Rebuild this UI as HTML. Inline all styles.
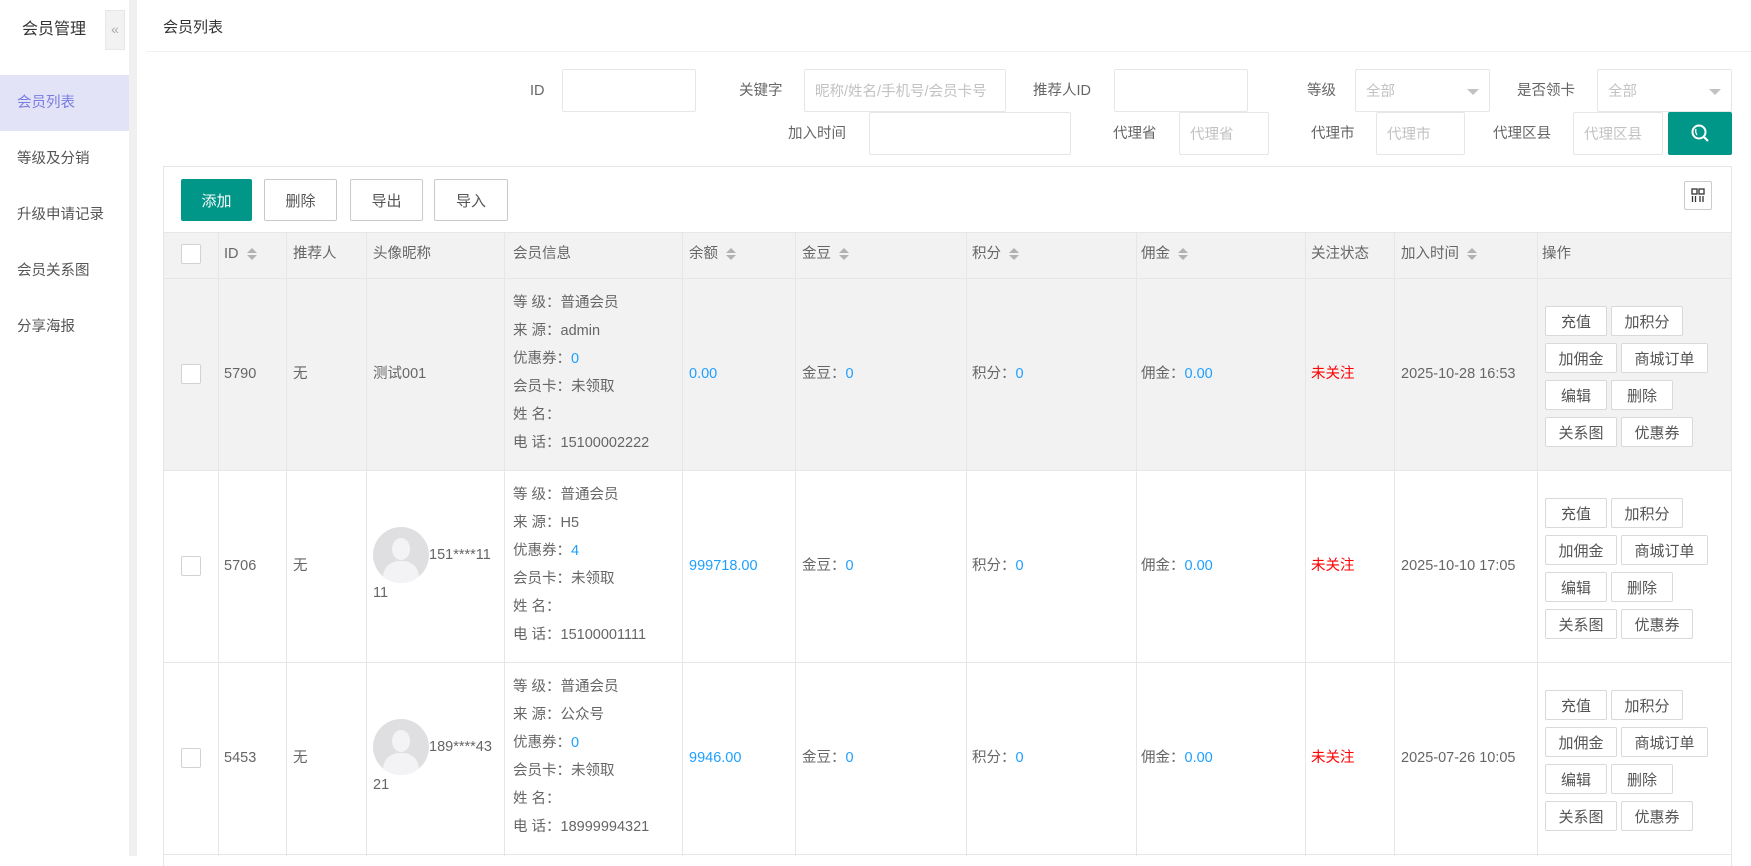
<!DOCTYPE html>
<html><head><meta charset="utf-8"><style>
*{margin:0;padding:0;box-sizing:border-box}
body{width:1751px;height:856px;overflow:hidden;background:#fff;font-family:"Liberation Sans","Noto Sans CJK SC",sans-serif;font-size:14.5px;color:#666;position:relative}
.a{position:absolute;white-space:nowrap}
.t{position:absolute;white-space:nowrap;transform:translateY(-50%);line-height:20px}
.inp{position:absolute;border:1px solid #e6e6e6;border-radius:2px;background:#fff;color:#c2c2c2;padding-left:10px;display:flex;align-items:center}
.btn{position:absolute;border:1px solid #c9c9c9;border-radius:2px;background:#fff;color:#555;display:flex;align-items:center;justify-content:center;font-size:15px}
.ob{position:absolute;border:1px solid #d9d9d9;border-radius:2px;background:#fff;color:#555;display:flex;align-items:center;justify-content:center;height:30px;font-size:15px}
.vl{position:absolute;width:1px;background:#e6e6e6}
.hl{position:absolute;height:1px;background:#e6e6e6}
.cb{position:absolute;width:20px;height:20px;border:1px solid #d2d2d2;border-radius:2px;background:#fff}
.b{color:#1e9fff}.r{color:#f00}
.sort{display:inline-block;vertical-align:middle;margin-left:8px;width:10px;height:14px;position:relative}
.sort:before{content:"";position:absolute;left:0;top:1px;border:5px solid transparent;border-top:0;border-bottom:5px solid #b2b2b2}
.sort:after{content:"";position:absolute;left:0;bottom:1px;border:5px solid transparent;border-bottom:0;border-top:5px solid #b2b2b2}
.av{position:absolute;width:56px;height:56px;border-radius:50%;background:#dfdfe1;overflow:hidden}
.av:before{content:"";position:absolute;left:19px;top:11px;width:18px;height:22px;border-radius:50%;background:#f3f3f5}
.av:after{content:"";position:absolute;left:10px;top:34px;width:36px;height:30px;border-radius:16px 16px 0 0;background:#f3f3f5}
</style></head><body>
<!-- sidebar -->
<div class="a" style="left:0;top:0;width:129px;height:856px;background:#fff"></div>
<div class="a" style="left:129px;top:0;width:8px;height:856px;background:#f0f0f0"></div>
<div class="t" style="left:22px;top:30px;font-size:16px;color:#333">会员管理</div>
<div class="a" style="left:105px;top:10px;width:20px;height:40px;background:#f2f2f2;border:1px solid #e8e8e8;color:#aaa;font-size:14px;text-align:center;line-height:36px">«</div>
<div class="a" style="left:0;top:75px;width:129px;height:56px;background:#e3e3f8"></div>
<div class="t" style="left:17px;top:103px;color:#7a7ce0">会员列表</div>
<div class="t" style="left:17px;top:159px;color:#555">等级及分销</div>
<div class="t" style="left:17px;top:215px;color:#555">升级申请记录</div>
<div class="t" style="left:17px;top:271px;color:#555">会员关系图</div>
<div class="t" style="left:17px;top:327px;color:#555">分享海报</div>
<!-- header -->
<div class="t" style="left:163px;top:28px;font-size:15px;color:#333">会员列表</div>
<div class="hl" style="left:146px;top:51px;width:1605px;background:#f0f0f0"></div>
<!-- filters -->
<div class="t" style="left:530px;top:91px">ID</div>
<div class="inp" style="left:562px;top:69px;width:134px;height:43px"></div>
<div class="t" style="left:739px;top:91px">关键字</div>
<div class="inp" style="left:804px;top:69px;width:202px;height:43px">昵称/姓名/手机号/会员卡号</div>
<div class="t" style="left:1033px;top:91px">推荐人ID</div>
<div class="inp" style="left:1114px;top:69px;width:134px;height:43px"></div>
<div class="t" style="left:1307px;top:91px">等级</div>
<div class="inp" style="left:1355px;top:69px;width:135px;height:43px">全部<span style="position:absolute;right:10px;top:19px;border:6px solid transparent;border-top:6px solid #c2c2c2;border-bottom:0"></span></div>
<div class="t" style="left:1517px;top:91px">是否领卡</div>
<div class="inp" style="left:1597px;top:69px;width:135px;height:43px">全部<span style="position:absolute;right:10px;top:19px;border:6px solid transparent;border-top:6px solid #c2c2c2;border-bottom:0"></span></div>
<div class="t" style="left:788px;top:134px">加入时间</div>
<div class="inp" style="left:869px;top:112px;width:202px;height:43px"></div>
<div class="t" style="left:1113px;top:134px">代理省</div>
<div class="inp" style="left:1179px;top:112px;width:90px;height:43px">代理省</div>
<div class="t" style="left:1311px;top:134px">代理市</div>
<div class="inp" style="left:1376px;top:112px;width:89px;height:43px">代理市</div>
<div class="t" style="left:1493px;top:134px">代理区县</div>
<div class="inp" style="left:1573px;top:112px;width:90px;height:43px">代理区县</div>
<div class="a" style="left:1668px;top:112px;width:64px;height:43px;background:#009688;border-radius:2px">
<svg width="64" height="43" viewBox="0 0 64 43"><circle cx="31" cy="20" r="6.5" fill="none" stroke="#fff" stroke-width="2"/><line x1="35.5" y1="24.5" x2="40" y2="29" stroke="#fff" stroke-width="2.2"/><path d="M28 17 q-1 3 1 6" stroke="#fff" fill="none" stroke-width="1.3"/></svg></div>
<!-- table panel -->
<div class="a" style="left:163px;top:166px;width:1569px;height:700px;border:1px solid #e6e6e6;border-bottom:0"></div>
<div class="btn" style="left:181px;top:179px;width:71px;height:42px;background:#009688;border-color:#009688;color:#fff">添加</div>
<div class="btn" style="left:264px;top:179px;width:73px;height:42px">删除</div>
<div class="btn" style="left:350px;top:179px;width:73px;height:42px">导出</div>
<div class="btn" style="left:434px;top:179px;width:74px;height:42px">导入</div>
<div class="a" style="left:1684px;top:181px;width:28px;height:29px;border:1px solid #ccc;border-radius:2px">
<svg width="26" height="27" viewBox="0 0 26 27"><rect x="7" y="7" width="5" height="5" fill="none" stroke="#333" stroke-width="1.3"/><rect x="14" y="7" width="5" height="5" fill="none" stroke="#333" stroke-width="1.3"/><path d="M7.5 14v6M10.5 14v6M15 14v6M18 14v6" stroke="#333" stroke-width="1.3"/></svg></div>
<!-- header row -->
<div class="a" style="left:164px;top:232px;width:1567px;height:46px;background:#f2f2f2"></div>
<div class="a" style="left:164px;top:278px;width:1567px;height:192px;background:#f2f2f2"></div>
<div class="hl" style="left:164px;top:232px;width:1567px"></div>
<div class="hl" style="left:164px;top:278px;width:1567px"></div>
<div class="hl" style="left:164px;top:470px;width:1567px"></div>
<div class="hl" style="left:164px;top:662px;width:1567px"></div>
<div class="hl" style="left:164px;top:854px;width:1567px"></div>
<div class="vl" style="left:218px;top:232px;height:624px"></div>
<div class="vl" style="left:286px;top:232px;height:624px"></div>
<div class="vl" style="left:366px;top:232px;height:624px"></div>
<div class="vl" style="left:504px;top:232px;height:624px"></div>
<div class="vl" style="left:682px;top:232px;height:624px"></div>
<div class="vl" style="left:795px;top:232px;height:624px"></div>
<div class="vl" style="left:966px;top:232px;height:624px"></div>
<div class="vl" style="left:1136px;top:232px;height:624px"></div>
<div class="vl" style="left:1305px;top:232px;height:624px"></div>
<div class="vl" style="left:1394px;top:232px;height:624px"></div>
<div class="vl" style="left:1537px;top:232px;height:624px"></div>
<div class="cb" style="left:181px;top:244px"></div>
<div class="t" style="left:224px;top:254px">ID<span class="sort"></span></div>
<div class="t" style="left:293px;top:254px">推荐人</div>
<div class="t" style="left:373px;top:254px">头像昵称</div>
<div class="t" style="left:513px;top:254px">会员信息</div>
<div class="t" style="left:689px;top:254px">余额<span class="sort"></span></div>
<div class="t" style="left:802px;top:254px">金豆<span class="sort"></span></div>
<div class="t" style="left:972px;top:254px">积分<span class="sort"></span></div>
<div class="t" style="left:1141px;top:254px">佣金<span class="sort"></span></div>
<div class="t" style="left:1311px;top:254px">关注状态</div>
<div class="t" style="left:1401px;top:254px">加入时间<span class="sort"></span></div>
<div class="t" style="left:1542px;top:254px">操作</div>

<!-- row1 -->
<div class="cb" style="left:181px;top:364px"></div>
<div class="t" style="left:224px;top:374px">5790</div>
<div class="t" style="left:293px;top:374px">无</div>
<div class="t" style="left:373px;top:374px">测试001</div>
<div class="t" style="left:513px;top:303px">等&nbsp;级：普通会员</div>
<div class="t" style="left:513px;top:331px">来&nbsp;源：admin</div>
<div class="t" style="left:513px;top:359px">优惠券：<span class="b">0</span></div>
<div class="t" style="left:513px;top:387px">会员卡：未领取</div>
<div class="t" style="left:513px;top:415px">姓&nbsp;名：</div>
<div class="t" style="left:513px;top:443px">电&nbsp;话：15100002222</div>
<div class="t b" style="left:689px;top:374px">0.00</div>
<div class="t" style="left:802px;top:374px">金豆：<span class="b">0</span></div>
<div class="t" style="left:972px;top:374px">积分：<span class="b">0</span></div>
<div class="t" style="left:1141px;top:374px">佣金：<span class="b">0.00</span></div>
<div class="t r" style="left:1311px;top:374px">未关注</div>
<div class="t" style="left:1401px;top:374px">2025-10-28 16:53</div>
<div class="ob" style="left:1545px;top:306px;width:62px">充值</div>
<div class="ob" style="left:1611px;top:306px;width:72px">加积分</div>
<div class="ob" style="left:1545px;top:343px;width:72px">加佣金</div>
<div class="ob" style="left:1621px;top:343px;width:87px">商城订单</div>
<div class="ob" style="left:1545px;top:380px;width:62px">编辑</div>
<div class="ob" style="left:1611px;top:380px;width:62px">删除</div>
<div class="ob" style="left:1545px;top:417px;width:72px">关系图</div>
<div class="ob" style="left:1621px;top:417px;width:72px">优惠券</div>

<!-- row2 -->
<div class="cb" style="left:181px;top:556px"></div>
<div class="t" style="left:224px;top:566px">5706</div>
<div class="t" style="left:293px;top:566px">无</div>
<div class="av" style="left:373px;top:527px"></div>
<div class="t" style="left:429px;top:555px">151****11</div>
<div class="t" style="left:373px;top:593px">11</div>
<div class="t" style="left:513px;top:495px">等&nbsp;级：普通会员</div>
<div class="t" style="left:513px;top:523px">来&nbsp;源：H5</div>
<div class="t" style="left:513px;top:551px">优惠券：<span class="b">4</span></div>
<div class="t" style="left:513px;top:579px">会员卡：未领取</div>
<div class="t" style="left:513px;top:607px">姓&nbsp;名：</div>
<div class="t" style="left:513px;top:635px">电&nbsp;话：15100001111</div>
<div class="t b" style="left:689px;top:566px">999718.00</div>
<div class="t" style="left:802px;top:566px">金豆：<span class="b">0</span></div>
<div class="t" style="left:972px;top:566px">积分：<span class="b">0</span></div>
<div class="t" style="left:1141px;top:566px">佣金：<span class="b">0.00</span></div>
<div class="t r" style="left:1311px;top:566px">未关注</div>
<div class="t" style="left:1401px;top:566px">2025-10-10 17:05</div>
<div class="ob" style="left:1545px;top:498px;width:62px">充值</div>
<div class="ob" style="left:1611px;top:498px;width:72px">加积分</div>
<div class="ob" style="left:1545px;top:535px;width:72px">加佣金</div>
<div class="ob" style="left:1621px;top:535px;width:87px">商城订单</div>
<div class="ob" style="left:1545px;top:572px;width:62px">编辑</div>
<div class="ob" style="left:1611px;top:572px;width:62px">删除</div>
<div class="ob" style="left:1545px;top:609px;width:72px">关系图</div>
<div class="ob" style="left:1621px;top:609px;width:72px">优惠券</div>

<!-- row3 -->
<div class="cb" style="left:181px;top:748px"></div>
<div class="t" style="left:224px;top:758px">5453</div>
<div class="t" style="left:293px;top:758px">无</div>
<div class="av" style="left:373px;top:719px"></div>
<div class="t" style="left:429px;top:747px">189****43</div>
<div class="t" style="left:373px;top:785px">21</div>
<div class="t" style="left:513px;top:687px">等&nbsp;级：普通会员</div>
<div class="t" style="left:513px;top:715px">来&nbsp;源：公众号</div>
<div class="t" style="left:513px;top:743px">优惠券：<span class="b">0</span></div>
<div class="t" style="left:513px;top:771px">会员卡：未领取</div>
<div class="t" style="left:513px;top:799px">姓&nbsp;名：</div>
<div class="t" style="left:513px;top:827px">电&nbsp;话：18999994321</div>
<div class="t b" style="left:689px;top:758px">9946.00</div>
<div class="t" style="left:802px;top:758px">金豆：<span class="b">0</span></div>
<div class="t" style="left:972px;top:758px">积分：<span class="b">0</span></div>
<div class="t" style="left:1141px;top:758px">佣金：<span class="b">0.00</span></div>
<div class="t r" style="left:1311px;top:758px">未关注</div>
<div class="t" style="left:1401px;top:758px">2025-07-26 10:05</div>
<div class="ob" style="left:1545px;top:690px;width:62px">充值</div>
<div class="ob" style="left:1611px;top:690px;width:72px">加积分</div>
<div class="ob" style="left:1545px;top:727px;width:72px">加佣金</div>
<div class="ob" style="left:1621px;top:727px;width:87px">商城订单</div>
<div class="ob" style="left:1545px;top:764px;width:62px">编辑</div>
<div class="ob" style="left:1611px;top:764px;width:62px">删除</div>
<div class="ob" style="left:1545px;top:801px;width:72px">关系图</div>
<div class="ob" style="left:1621px;top:801px;width:72px">优惠券</div>
</body></html>
